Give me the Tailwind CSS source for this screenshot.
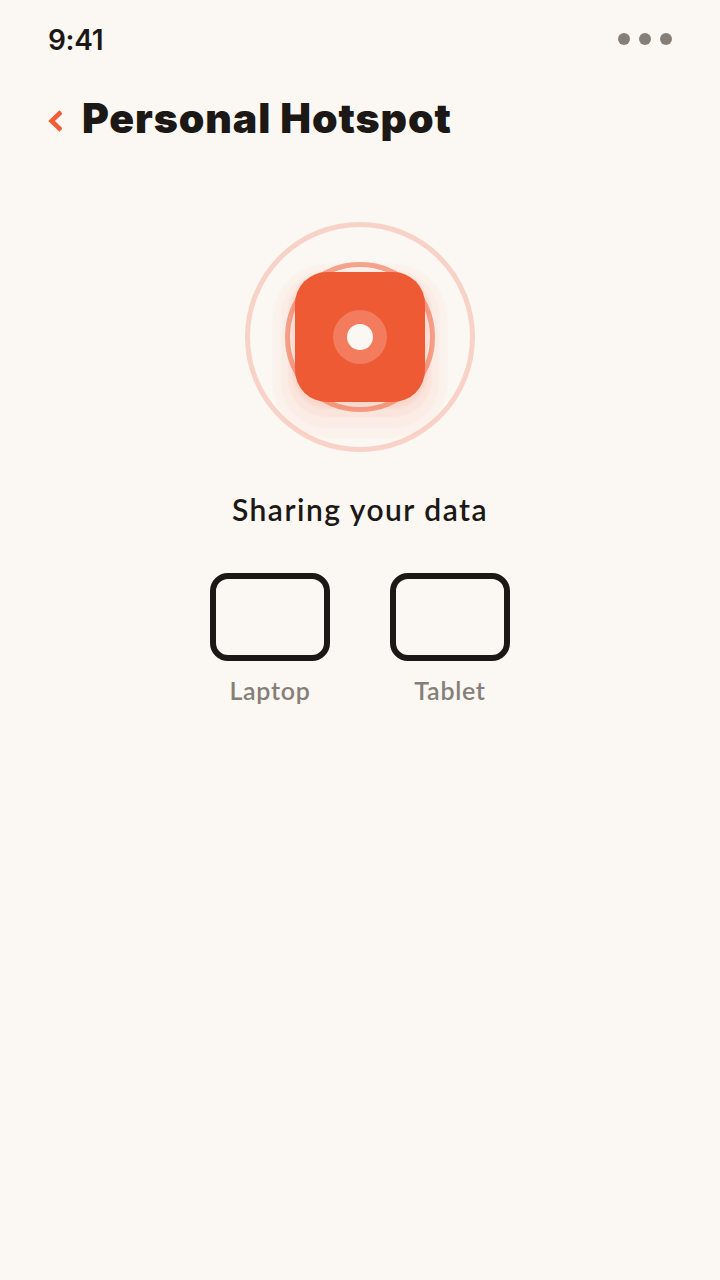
<!DOCTYPE html>
<html><head><meta charset="utf-8"><script src="https://cdn.jsdelivr.net/npm/@tailwindcss/browser@4"></script></head>
<body class="bg-[#fbf7f2]">
<div class="w-[720px] h-[1280px] bg-[#fbf7f2] flex flex-col font-['Lato','Noto_Sans',sans-serif] overflow-hidden">
  <div class="flex items-center justify-between px-12 h-[40px] mt-[20px]">
    <span class="text-[28px] leading-[40px] font-semibold text-[#1c1815] font-['Inter',sans-serif] tracking-[-0.3px]">9:41</span>
    <div class="flex gap-[9px] -mt-[2px]">
      <span class="w-3 h-3 rounded-full bg-[#857f78]"></span>
      <span class="w-3 h-3 rounded-full bg-[#857f78]"></span>
      <span class="w-3 h-3 rounded-full bg-[#857f78]"></span>
    </div>
  </div>
  <div class="flex items-center pl-12 mt-[28px] h-[60px]">
    <svg class="w-[14px] h-[22px] shrink-0 mt-[5px]" viewBox="0 0 14 22" fill="none"><path d="M13 2 L3.5 11 L13 20" stroke="#f15d36" stroke-width="4.5"/></svg>
    <h1 class="ml-[20px] text-[41px] leading-[60px] font-black text-[#1c1815] font-['Inter',sans-serif] tracking-[0.9px] whitespace-nowrap">Personal Hotspot</h1>
  </div>
  <div class="relative self-center mt-[74px] w-[230px] h-[230px] rounded-full border-[5px] border-[#f8d2c6] flex items-center justify-center shrink-0">
    <div class="absolute w-[150px] h-[150px] rounded-full border-[5px] border-[#f6a48e]"></div>
    <div class="relative w-[130px] h-[130px] rounded-[32px] bg-[#ee5a33] shadow-[0_14px_2px_22px_rgba(241,93,54,0.03),0_12px_2px_14px_rgba(241,93,54,0.035),0_8px_2px_7px_rgba(241,93,54,0.05),0_4px_3px_2px_rgba(241,93,54,0.09)] flex items-center justify-center">
      <div class="w-[54px] h-[54px] rounded-full bg-[#f37c5e] flex items-center justify-center">
        <div class="w-[26px] h-[26px] rounded-full bg-[#fbf7f2]"></div>
      </div>
    </div>
  </div>
  <p class="mt-[37px] text-center text-[30px] leading-[40px] font-semibold tracking-[1.5px] text-[#1c1815]">Sharing your data</p>
  <div class="flex justify-center gap-[60px] mt-[44px]">
    <div class="flex flex-col items-center w-[120px]">
      <div class="w-[120px] h-[88px] rounded-[18px] border-[6px] border-[#1c1815]"></div>
      <span class="mt-[13px] text-[25px] leading-[32px] font-semibold tracking-[0.7px] text-[#857f78]">Laptop</span>
    </div>
    <div class="flex flex-col items-center w-[120px]">
      <div class="w-[120px] h-[88px] rounded-[18px] border-[6px] border-[#1c1815]"></div>
      <span class="mt-[13px] text-[25px] leading-[32px] font-semibold tracking-[0.7px] text-[#857f78]">Tablet</span>
    </div>
  </div>
</div>
</body></html>
